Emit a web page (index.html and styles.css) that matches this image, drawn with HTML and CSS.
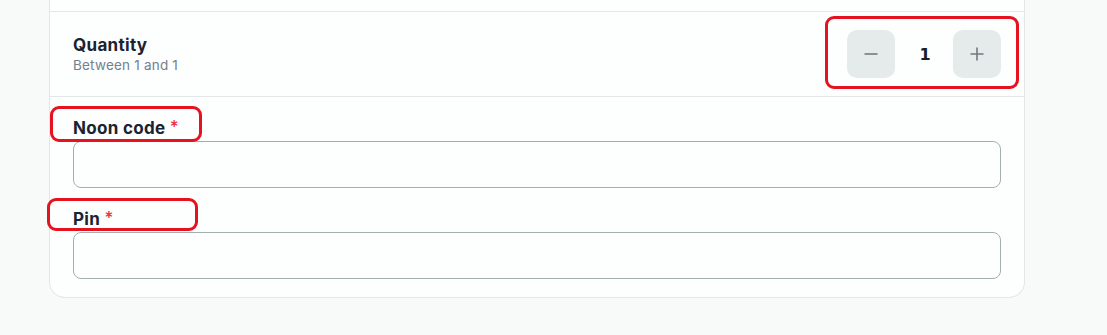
FILE: index.html
```html
<!DOCTYPE html>
<html>
<head>
<meta charset="utf-8">
<link rel="stylesheet" href="styles.css">
</head>
<body>
<div class="page">
  <div class="card">
    <div class="card-top"></div>
    <div class="qty-row">
      <div class="qty-text">
        <div class="qty-title">Quantity</div>
        <div class="qty-sub">Between 1 and 1</div>
      </div>
      <div class="stepper">
        <button class="step-btn" aria-label="decrease">
          <svg width="16" height="16" viewBox="0 0 16 16"><path d="M1.5 8h13" stroke="#6f7b7b" stroke-width="1.6" fill="none"/></svg>
        </button>
        <span class="qty-value">1</span>
        <button class="step-btn" aria-label="increase">
          <svg width="16" height="16" viewBox="0 0 16 16"><path d="M1.5 8h13M8 1.5v13" stroke="#6f7b7b" stroke-width="1.6" fill="none"/></svg>
        </button>
      </div>
    </div>
    <div class="form">
      <label class="field">
        <span class="label">Noon code <span class="req">*</span></span>
        <input class="input" type="text">
      </label>
      <label class="field">
        <span class="label">Pin <span class="req">*</span></span>
        <input class="input" type="text">
      </label>
    </div>
  </div>
  <div class="mark mark-stepper"></div>
  <div class="mark mark-code"></div>
  <div class="mark mark-pin"></div>
</div>
</body>
</html>
```

FILE: styles.css
```css
* { box-sizing: border-box; }
html, body { margin: 0; padding: 0; }
body {
  background: #f7faf9;
  font-family: Inter, "Noto Sans", sans-serif;
  color: #1b2331;
}
.page {
  position: relative;
  padding-left: 49px;
  width: 1107px;
  height: 335px;
}
.card {
  width: 976px;
  background: #fdfefe;
  border: 1px solid #e2e8e7;
  border-top: none;
  border-radius: 0 0 16px 16px;
}
.card-top {
  height: 12px;
  border-bottom: 1px solid #e2e8e7;
}
.qty-row {
  height: 85px;
  display: flex;
  align-items: center;
  justify-content: space-between;
  padding: 0 23px;
  border-bottom: 1px solid #e2e8e7;
}
.qty-title {
  font-size: 17px;
  font-weight: 700;
  line-height: 20px;
  letter-spacing: 0.3px;
  color: #1b2331;
}
.qty-sub {
  font-size: 13.5px;
  line-height: 18px;
  letter-spacing: 0.2px;
  color: #728091;
  margin-top: 1px;
}
.stepper {
  display: flex;
  align-items: center;
  gap: 0;
}
.step-btn {
  width: 48px;
  height: 48px;
  border: none;
  border-radius: 10px;
  background: #e4ebea;
  display: flex;
  align-items: center;
  justify-content: center;
  padding: 0;
}
.qty-value {
  width: 58px;
  padding-left: 2px;
  text-align: center;
  font-family: "DejaVu Sans", sans-serif;
  font-weight: 700;
  font-size: 16px;
  color: #14202e;
}
.form {
  padding: 18px 23px 18px;
  display: flex;
  flex-direction: column;
  gap: 18px;
}
.field {
  display: flex;
  flex-direction: column;
}
.label {
  font-size: 17px;
  font-weight: 700;
  line-height: 24px;
  letter-spacing: 0.3px;
  margin-bottom: 1px;
  color: #1b2331;
}
.req {
  color: #e8333a;
  font-size: 17px;
  vertical-align: 1px;
  font-weight: 500;
}
.input {
  height: 47px;
  border: 1px solid #a3b0b0;
  border-radius: 8px;
  background: #fdfefe;
  font-size: 16px;
  padding: 0 12px;
}
.mark {
  position: absolute;
  border: 3px solid #e5121f;
  border-radius: 9px;
}
.mark-stepper { left: 825px; top: 16px; width: 194px; height: 73px; }
.mark-code { left: 50px; top: 106px; width: 152px; height: 36px; }
.mark-pin { left: 47px; top: 198px; width: 151px; height: 33px; }
```
